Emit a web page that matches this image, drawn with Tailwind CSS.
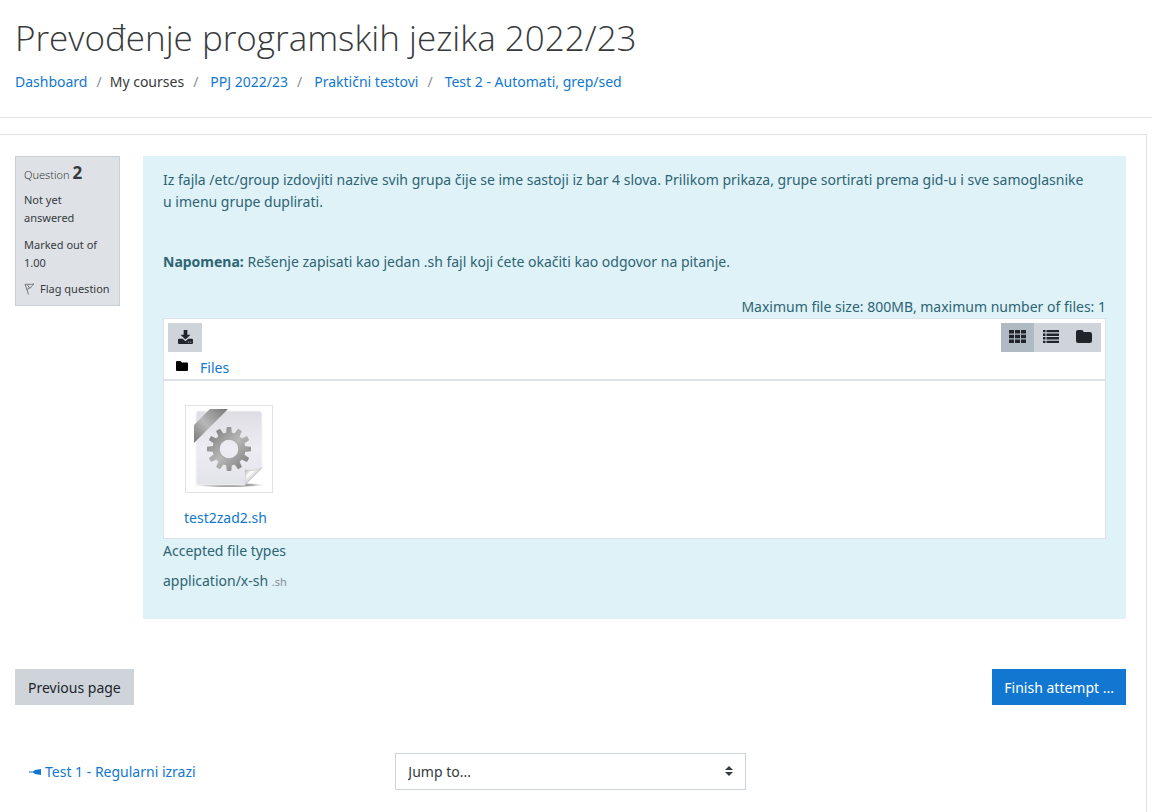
<!DOCTYPE html>
<html lang="en">
<head>
<meta charset="utf-8">
<meta name="viewport" content="width=device-width, initial-scale=1">
<title>Prevođenje programskih jezika 2022/23</title>
<script src="https://cdn.jsdelivr.net/npm/@tailwindcss/browser@4"></script>
</head>
<body class="flex min-h-screen flex-col bg-white font-['Noto_Sans','Open_Sans',sans-serif] text-[14px] leading-[22px] text-[#373a3c]">
<header class="border-b border-[#dee2e6] px-[15px] pt-4 pb-6">
  <h1 class="font-['Open_Sans','Noto_Sans',sans-serif] text-[35px] leading-[44px] font-light">Prevođenje programskih jezika 2022/23</h1>
  <nav aria-label="Breadcrumb" class="mt-[11px]">
    <ol class="flex flex-wrap text-[#1177d1]">
      <li><a href="#">Dashboard</a></li>
      <li class="text-[#373a3c]"><span class="pr-2 pl-[9px] text-[#868e96]">/</span>My courses</li>
      <li><span class="pr-3 pl-[9px] text-[#868e96]">/</span><a href="#">PPJ 2022/23</a></li>
      <li><span class="pr-3 pl-[9px] text-[#868e96]">/</span><a href="#">Praktični testovi</a></li>
      <li><span class="pr-3 pl-[9px] text-[#868e96]">/</span><a href="#">Test 2 - Automati, grep/sed</a></li>
    </ol>
  </nav>
</header>
<main class="mt-4 mr-[5px] grow border-t border-r border-[#dee2e6] pt-[21px] pr-5 pl-[15px]">
  <div class="flex items-start gap-[23px]">
    <aside class="w-[105px] shrink-0 border border-[#cad0d7] bg-[#dee2e6] px-2 py-[7px] text-[11px] leading-[18px]">
      <h2 class="leading-[20px] font-light">Question <span class="text-[17px] leading-[18px] font-bold">2</span></h2>
      <p class="mt-[6px]">Not yet answered</p>
      <p class="mt-[9px]">Marked out of 1.00</p>
      <a href="#" class="mt-2 flex items-center gap-[5px] whitespace-nowrap">
        <svg class="h-3 w-[11px] shrink-0" viewBox="0 0 11 12" fill="none" stroke="#777" stroke-width="1"><path d="M1 1l3.500 10.500M1 1.500c3-.8 5 .5 9-.5-1.500 1-2.500 2-3 3.500M3 6.500c1.500-1 2.500-1.500 4-2M3.500 2l2 3"/></svg>
        Flag question</a>
    </aside>
    <section class="min-w-0 grow bg-[#def2f8] px-5 pt-[13px] pb-[26px] text-[#2f6473]">
      <p class="pr-4">Iz fajla /etc/group izdovjiti nazive svih grupa čije se ime sastoji iz bar 4 slova. Prilikom prikaza, grupe sortirati prema gid-u i sve samoglasnike u imenu grupe duplirati.</p>
      <p class="mt-[38px]"><strong class="font-bold">Napomena:</strong> Rešenje zapisati kao jedan .sh fajl koji ćete okačiti kao odgovor na pitanje.</p>
      <p class="mt-[23px] text-right">Maximum file size: 800MB, maximum number of files: 1</p>
      <div class="border border-[#dee2e6] bg-white text-[#1177d1]">
        <div class="border-b-2 border-[#dee2e6]">
          <div class="flex justify-between p-1 pb-[5px] text-[#212529]">
            <button type="button" aria-label="Download all" class="flex h-[29px] w-[34px] items-center justify-center bg-[#ced4da] pb-[2px]">
              <svg class="h-[14px] w-[15px]" viewBox="0 0 16 15" fill="currentColor"><path d="M6 0h4v5h3.300L8 10.300 2.700 5H6z"/><path fill-rule="evenodd" d="M1 9.500h4L8 12l3-2.500h4a1 1 0 0 1 1 1V14a1 1 0 0 1-1 1H1a1 1 0 0 1-1-1v-3.500a1 1 0 0 1 1-1zM10.500 12.500v1H12v-1zm2.500 0v1h1.300v-1z"/></svg>
            </button>
            <div class="flex">
              <button type="button" aria-label="Icon view" class="flex h-[29px] w-[33px] items-center justify-center bg-[#afbac3] pb-[2px]">
                <svg class="h-[13px] w-[17px]" viewBox="0 0 17 13" fill="currentColor"><path d="M0 0h5v3.500H0zM6 0h5v3.500H6zM12 0h5v3.500h-5zM0 4.700h5v3.500H0zM6 4.700h5v3.500H6zM12 4.700h5v3.500h-5zM0 9.400h5V13H0zM6 9.400h5V13H6zM12 9.400h5V13h-5z"/></svg>
              </button>
              <button type="button" aria-label="List view" class="flex h-[29px] w-[33px] items-center justify-center bg-[#ced4da] pb-[2px]">
                <svg class="h-[13px] w-4" viewBox="0 0 16 13" fill="currentColor"><path d="M0 0h2.500v2.300H0zM3.500 0H16v2.300H3.500zM0 3.600h2.500v2.300H0zM3.500 3.600H16v2.300H3.500zM0 7.100h2.500v2.300H0zM3.500 7.100H16v2.300H3.500zM0 10.700h2.500V13H0zM3.500 10.700H16V13H3.500z"/></svg>
              </button>
              <button type="button" aria-label="Tree view" class="flex h-[29px] w-[34px] items-center justify-center bg-[#ced4da] pb-[2px]">
                <svg class="h-[13px] w-4" viewBox="0 0 16 13" fill="currentColor"><path d="M2 0h3.500a2 2 0 0 1 2 2h6.300A2.200 2.200 0 0 1 16 4.200v6.600a2.200 2.200 0 0 1-2.200 2.200H2.200A2.200 2.200 0 0 1 0 10.800V2a2 2 0 0 1 2-2z"/></svg>
              </button>
            </div>
          </div>
          <div class="flex items-center gap-3 pl-3">
            <svg class="mb-1 h-[10px] w-3" viewBox="0 0 12 10" fill="#000"><path d="M1 0h3.500L6 1.500h5a1 1 0 0 1 1 1V9a1 1 0 0 1-1 1H1a1 1 0 0 1-1-1V1a1 1 0 0 1 1-1z"/></svg>
            <a href="#">Files</a>
          </div>
        </div>
        <div class="px-5 pt-6 pb-[9px]">
          <a href="#" class="inline-block">
            <svg class="ml-[1px] h-[88px] w-[88px] border border-[#dee2e6]" viewBox="0 0 86 86">
              <defs>
                <linearGradient id="paper" x1="0" y1="0" x2="0" y2="1"><stop offset="0" stop-color="#dddde3"/><stop offset=".5" stop-color="#ececf2"/><stop offset="1" stop-color="#e3e3ea"/></linearGradient>
                <linearGradient id="ribbon" x1="0" y1="1" x2="1" y2="0"><stop offset="0" stop-color="#777"/><stop offset=".45" stop-color="#b8b8b8"/><stop offset="1" stop-color="#777"/></linearGradient>
                <linearGradient id="gear" gradientUnits="userSpaceOnUse" x1="27" y1="27" x2="59" y2="59"><stop offset="0" stop-color="#858585"/><stop offset=".5" stop-color="#b8b8b8"/><stop offset="1" stop-color="#858585"/></linearGradient>
                <linearGradient id="curl" x1="0" y1="0" x2="1" y2="1"><stop offset=".1" stop-color="#bbb"/><stop offset=".3" stop-color="#fff"/><stop offset=".6" stop-color="#bbb"/></linearGradient>
                <radialGradient id="shade"><stop offset="0" stop-color="#555"/><stop offset=".65" stop-color="#999" stop-opacity=".8"/><stop offset="1" stop-color="#fff" stop-opacity="0"/></radialGradient>
                <mask id="teeth" maskUnits="userSpaceOnUse" x="20" y="20" width="46" height="46">
                  <circle cx="43" cy="43" r="16.500" fill="#fff"/>
                  <g id="spoke" fill="#fff"><path id="bar" d="M40 28l.8-7h4.400l.8 7v30l-.8 7h-4.400L40 58z"/><use href="#bar" transform="rotate(30 43 43)"/><use href="#bar" transform="rotate(60 43 43)"/></g>
                  <use href="#spoke" transform="rotate(90 43 43)"/>
                  <circle cx="43" cy="43" r="9.700" fill="#000"/>
                </mask>
              </defs>
              <ellipse cx="43" cy="79" rx="38" ry="2.500" fill="url(#shade)"/>
              <path d="M13 5h60q3 0 3 3v54L59 79H13q-3 0-3-3V8q0-3 3-3z" fill="url(#paper)" stroke="#f5f5f8"/>
              <path d="M24 3h18L8 37V19z" fill="url(#ribbon)"/>
              <path d="M76 62 59 79q2-5 0-15 8 2 17-2z" fill="url(#curl)" stroke="#bbb" stroke-width=".5"/>
              <path d="M20 20h46v46H20z" fill="url(#gear)" mask="url(#teeth)"/>
              <circle cx="43" cy="43" r="9.700" fill="none" stroke="#888" stroke-width=".5"/>
            </svg>
            <span class="mt-[14px] block">test2zad2.sh</span>
          </a>
        </div>
      </div>
      <p class="mt-[1px]">Accepted file types</p>
      <p class="mt-2">application/x-sh <small class="text-[11px] text-[#868e96]">.sh</small></p>
    </section>
  </div>
  <div class="mt-[50px] flex justify-between">
    <button type="button" class="h-9 bg-[#ced4da] px-[13px] pt-[1px] text-[#212529]">Previous page</button>
    <button type="button" class="h-9 bg-[#1177d1] px-3 pt-[1px] text-white">Finish attempt ...</button>
  </div>
  <div class="mt-12 grid grid-cols-3 items-center gap-[30px]">
    <a href="#" class="flex items-center gap-1 pl-[14px] text-[#1177d1]">
      <svg class="h-[6px] w-3" viewBox="0 0 12 6" fill="currentColor"><path d="M0 2.500h4L6 1l6-1v6L6 5 4 3.500H0z"/></svg>
      Test 1 - Regularni izrazi</a>
    <div class="relative">
      <select aria-label="Jump to..." class="h-[37px] w-full appearance-none border border-[#ced4da] bg-white px-3 text-[#373a3c]"><option>Jump to...</option></select>
      <svg class="pointer-events-none absolute top-[13px] right-[13px] h-[10px] w-2" viewBox="0 0 8 10" fill="#343a40"><path d="M4 0l4 4H0zM4 10l4-4H0z"/></svg>
    </div>
  </div>
</main>
</body>
</html>
